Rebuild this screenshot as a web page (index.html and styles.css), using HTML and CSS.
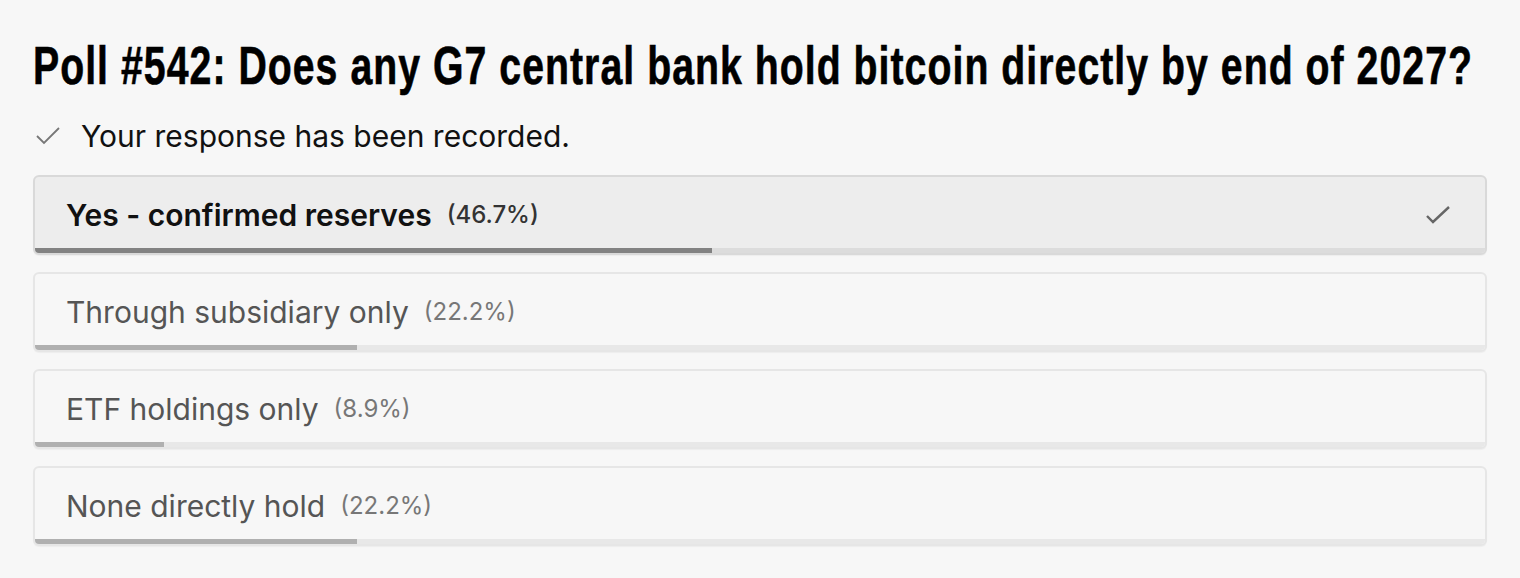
FILE: index.html
```html
<!DOCTYPE html>
<html>
<head>
    <title>Poll #542</title>
    <meta charset="utf-8" />
    <link rel="stylesheet" href="styles.css">
</head>
<body>

    <div class="poll">

        <h1 class="poll_title"><span class="title_text">Poll #542: Does any G7 central bank hold bitcoin directly by end of 2027?</span></h1>

        <p class="poll_status">
            <svg class="status_check" width="24" height="18" viewBox="0 0 24 18"><polyline points="1,9 8,16 23,1" /></svg>
            Your response has been recorded.
        </p>

        <ul class="poll_options">
            <li class="option option_picked">
                <div class="option_row">
                    <span class="option_label">Yes - confirmed reserves</span>
                    <span class="option_pct">(46.7%)</span>
                    <svg class="option_check" width="24" height="20" viewBox="0 0 24 20"><polyline points="1,11 7,17 23,2" /></svg>
                </div>
                <div class="option_bar"><div class="option_fill" style="width:46.7%"></div></div>
            </li>
            <li class="option">
                <div class="option_row">
                    <span class="option_label">Through subsidiary only</span>
                    <span class="option_pct">(22.2%)</span>
                </div>
                <div class="option_bar"><div class="option_fill" style="width:22.2%"></div></div>
            </li>
            <li class="option">
                <div class="option_row">
                    <span class="option_label">ETF holdings only</span>
                    <span class="option_pct">(8.9%)</span>
                </div>
                <div class="option_bar"><div class="option_fill" style="width:8.9%"></div></div>
            </li>
            <li class="option">
                <div class="option_row">
                    <span class="option_label">None directly hold</span>
                    <span class="option_pct">(22.2%)</span>
                </div>
                <div class="option_bar"><div class="option_fill" style="width:22.2%"></div></div>
            </li>
        </ul>

    </div>

</body>
</html>
```

FILE: styles.css
```css
body {
    margin: 0;
    background: #f7f7f7;
    font-family: Inter, "Noto Sans", sans-serif;
    color: #111;
    overflow: hidden;
}

.poll {
    padding: 34px 33px 0 33px;
}

.poll_title {
    margin: 0;
    font-family: "Liberation Sans", Arial, sans-serif;
    font-size: 53px;
    line-height: 64px;
    font-weight: bold;
    color: #000;
    white-space: nowrap;
    overflow: hidden;
}

/* squeeze the heading into a narrow, tall face */
.title_text {
    display: inline-block;
    transform: scaleX(0.74);
    transform-origin: left center;
    letter-spacing: 1.4px;
    -webkit-text-stroke: 0.6px #000;
}

.poll_status {
    margin: 18px 0 0 0;
    display: flex;
    align-items: center;
    font-size: 30px;
    line-height: 40px;
    color: #111;
}

.status_check {
    margin: 0 21px 0 3px;
    fill: none;
    stroke: #777;
    stroke-width: 1.8;
}

.poll_options {
    list-style: none;
    margin: 19px 0 0 0;
    padding: 0;
}

.option {
    height: 80px;
    box-sizing: border-box;
    margin-bottom: 17px;
    border: 2px solid #e6e6e6;
    border-radius: 6px;
    overflow: hidden;
    background: #f7f7f7;
    display: flex;
    flex-direction: column;
    box-shadow: 0 1px 1px rgba(0, 0, 0, 0.04);
}

.option_row {
    flex: 1;
    display: flex;
    align-items: center;
    padding: 4px 35px 0 31px;
}

.option_label {
    font-size: 30px;
    color: #555;
}

.option_pct {
    margin-left: 15px;
    font-size: 24px;
    color: #777;
}

.option_check {
    margin-left: auto;
    fill: none;
    stroke: #666;
    stroke-width: 2.4;
}

.option_bar {
    height: 5px;
    background: #e8e8e8;
}

.option_fill {
    height: 100%;
    background: #b0b0b0;
}

.option_picked {
    background: #ededed;
    border-color: #d9d9d9;
}

.option_picked .option_label {
    font-weight: 600;
    color: #111;
}

.option_picked .option_pct {
    color: #333;
    font-weight: 500;
}

.option_picked .option_bar {
    background: #dcdcdc;
}

.option_picked .option_fill {
    background: #828282;
}
```
